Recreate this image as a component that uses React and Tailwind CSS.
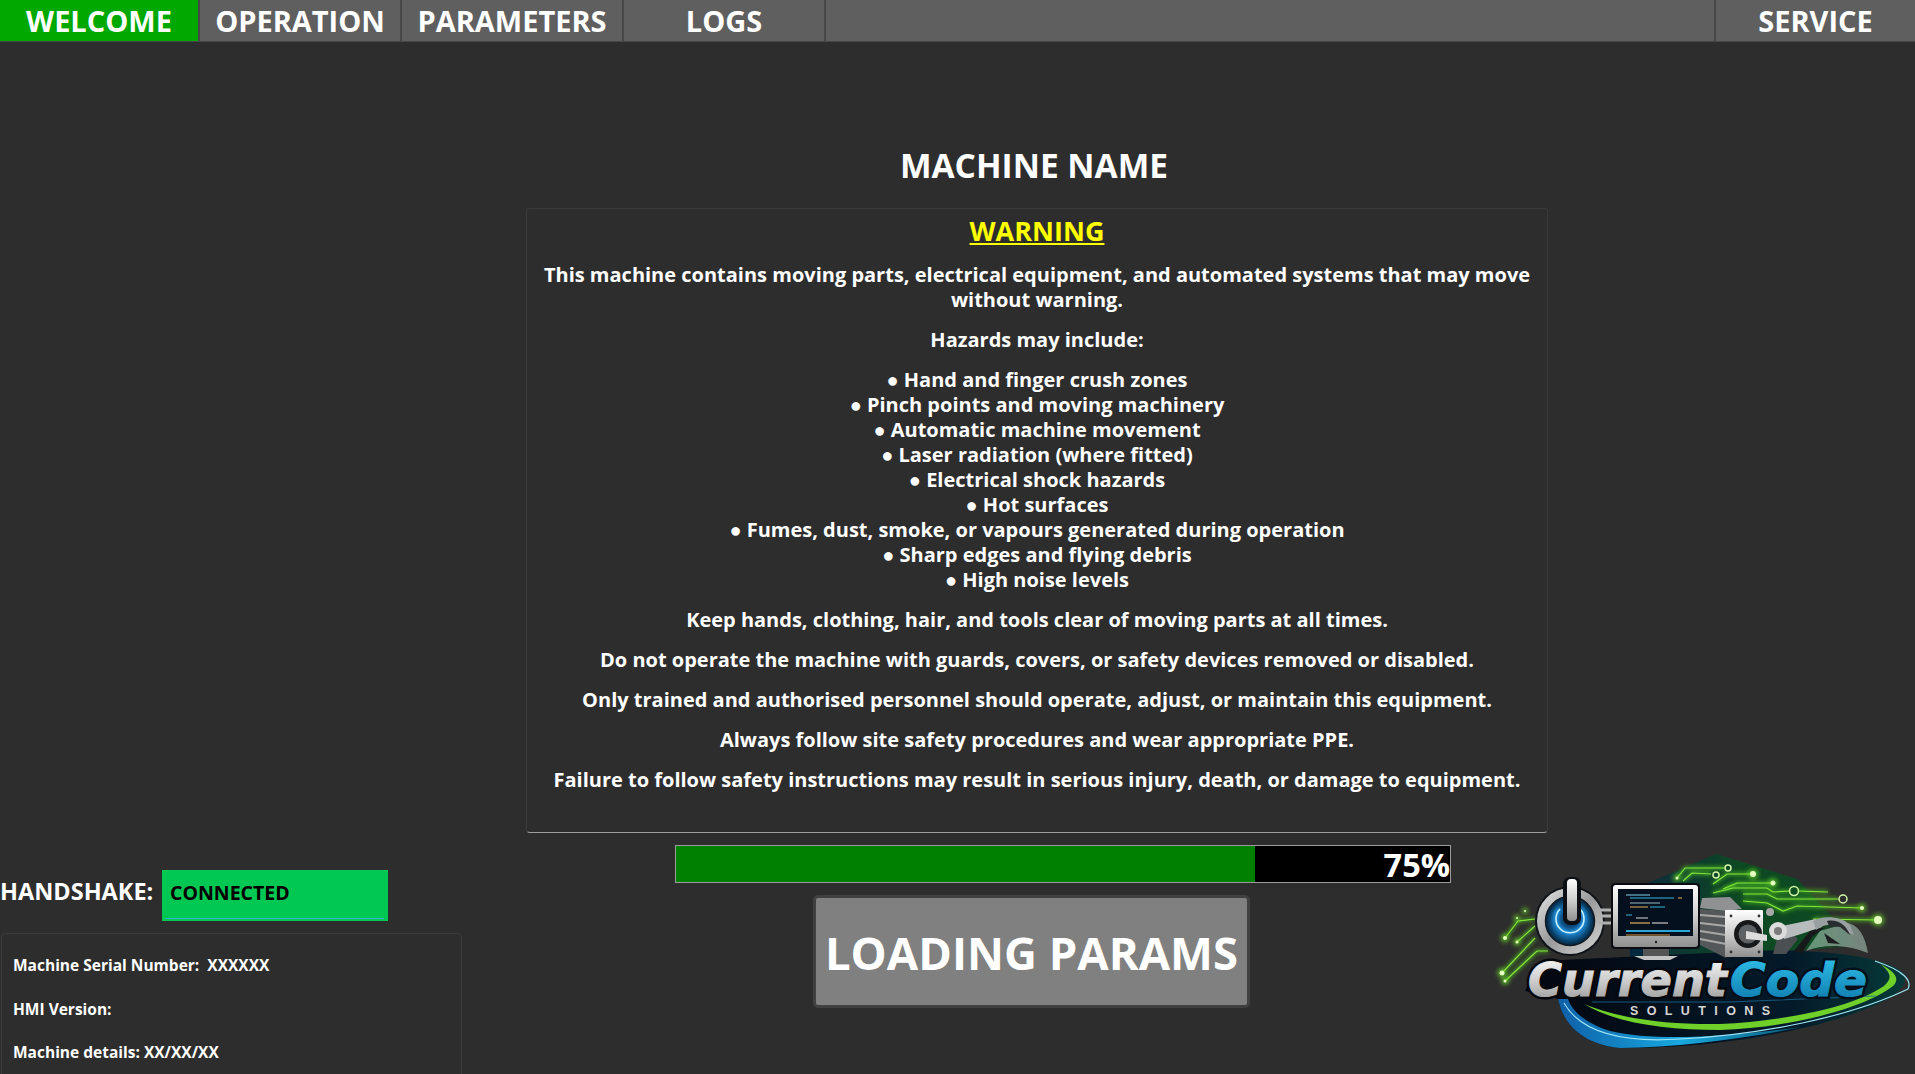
const tabs = [
  { label: 'WELCOME', width: 'w-[200px]', active: true },
  { label: 'OPERATION', width: 'w-[202px]' },
  { label: 'PARAMETERS', width: 'w-[222px]' },
  { label: 'LOGS', width: 'w-[202px]' },
];

const hazards = [
  'Hand and finger crush zones',
  'Pinch points and moving machinery',
  'Automatic machine movement',
  'Laser radiation (where fitted)',
  'Electrical shock hazards',
  'Hot surfaces',
  'Fumes, dust, smoke, or vapours generated during operation',
  'Sharp edges and flying debris',
  'High noise levels',
];

const notices = [
  'Keep hands, clothing, hair, and tools clear of moving parts at all times.',
  'Do not operate the machine with guards, covers, or safety devices removed or disabled.',
  'Only trained and authorised personnel should operate, adjust, or maintain this equipment.',
  'Always follow site safety procedures and wear appropriate PPE.',
  'Failure to follow safety instructions may result in serious injury, death, or damage to equipment.',
];

const circuitLines = [
  'M197 47 L205 37 L245 37',
  'M203 50 L212 42 L231 43',
  'M233 53 L247 43 L273 43',
  'M243 58 L257 52 L293 52',
  'M233 62 L253 57 L287 57 L293 61 L310 60',
  'M318 60 L348 61',
  'M263 63 L287 63 L297 68 L358 68',
  'M263 70 L287 72 L303 80 L317 75 L382 77',
  'M333 88 L398 89',
  'M25 107 L38 90 L55 88',
  'M37 111 L55 95',
  'M22 142 L55 107',
  'M25 150 L57 120 L68 120',
];

const circuitNodes = [
  [273, 43, 3],
  [293, 52, 2.5],
  [382, 77, 2],
  [398, 89, 4],
  [197, 47, 1.5],
  [25, 107, 2],
  [37, 111, 1.5],
  [22, 142, 2.5],
  [25, 150, 1.5],
  [45, 80, 1],
  [37, 87, 1],
];

const circuitRings = [
  [248, 37, 3],
  [236, 44, 3],
  [314, 60, 4.5],
  [363, 68, 4],
];

const codeLines = [
  ['M146 64 H170', '#7fd4e8', 1],
  ['M150 67 H194', '#39b6d8', 1.2],
  ['M198 67 H202', '#c49a4e', 1.2],
  ['M150 72 H180', '#9ab8c4', 1],
  ['M150 76 H168', '#e0b060', 1],
  ['M170 76 H185', '#39b6d8', 1],
  ['M146 84 H152', '#39b6d8', 1],
  ['M156 87 H168', '#d8d8d8', 1],
  ['M150 92 H170', '#e0b060', 1.2],
  ['M172 92 H188', '#c8c8c8', 1.2],
  ['M146 100 H210', '#29a8d8', 2],
  ['M146 104 H190', '#d89a3c', 1.2],
];

const Logo = () => (
  <svg viewBox="0 2 435 242" className="w-[435px] h-[242px] overflow-visible shrink-0 ml-[29px]">
    <defs>
      <linearGradient id="silver" x1="0" y1="0" x2="0" y2="1">
        <stop offset="0" stopColor="#ffffff" />
        <stop offset="0.55" stopColor="#c9c9c9" />
        <stop offset="1" stopColor="#8f8f8f" />
      </linearGradient>
      <linearGradient id="chrome" x1="0" y1="0" x2="1" y2="1">
        <stop offset="0" stopColor="#e8e8e8" />
        <stop offset="0.5" stopColor="#9a9a9a" />
        <stop offset="1" stopColor="#d8d8d8" />
      </linearGradient>
      <linearGradient id="codeBlue" x1="0" y1="0" x2="0" y2="1">
        <stop offset="0" stopColor="#33c4ee" />
        <stop offset="1" stopColor="#0a74a8" />
      </linearGradient>
      <linearGradient id="backdrop" x1="0" y1="0" x2="1" y2="0">
        <stop offset="0" stopColor="#05283f" />
        <stop offset="0.5" stopColor="#0d4a22" />
        <stop offset="0.8" stopColor="#0d4a22" />
        <stop offset="1" stopColor="#0d4a22" stopOpacity="0" />
      </linearGradient>
      <linearGradient id="band" x1="0" y1="0" x2="1" y2="0">
        <stop offset="0" stopColor="#03060f" />
        <stop offset="0.7" stopColor="#041a2a" />
        <stop offset="1" stopColor="#063a38" />
      </linearGradient>
      <linearGradient id="swoosh" x1="0" y1="0" x2="1" y2="0">
        <stop offset="0" stopColor="#0f5fa8" />
        <stop offset="0.5" stopColor="#18a8e0" />
        <stop offset="1" stopColor="#0c5a78" />
      </linearGradient>
      <radialGradient id="disc" cx="0.5" cy="0.5" r="0.5">
        <stop offset="0" stopColor="#0a3a66" />
        <stop offset="0.7" stopColor="#0f5d94" />
        <stop offset="1" stopColor="#052038" />
      </radialGradient>
      <filter id="glow" x="-50%" y="-50%" width="200%" height="200%">
        <feGaussianBlur stdDeviation="2" />
      </filter>
      <filter id="soft" x="-20%" y="-20%" width="140%" height="140%">
        <feGaussianBlur stdDeviation="0.5" />
      </filter>
    </defs>

    <path d="M150 60 L236 23 L317 48 L380 115 L150 130 Z" fill="url(#backdrop)" filter="url(#soft)" />

    <path d="M78 168 C85 200 110 214 140 217 C230 218 340 200 400 172 C430 158 432 142 410 134 C380 122 320 118 270 120 L60 130 L45 160 Z" fill="url(#band)" />

    <g stroke="#4fc21f" strokeWidth="2.5" fill="none" filter="url(#glow)">
      {circuitLines.map((d) => <path key={d} d={d} />)}
    </g>
    <g stroke="#86e63c" strokeWidth="1.2" fill="none">
      {circuitLines.map((d) => <path key={d} d={d} />)}
      {circuitRings.map(([x, y, r]) => <circle key={`${x}-${y}`} cx={x} cy={y} r={r} stroke="#d4f8a8" strokeWidth="1.5" />)}
    </g>
    {circuitNodes.map(([x, y, r]) => (
      <g key={`${x}-${y}`}>
        <circle cx={x} cy={y} r={r + 2.5} fill="#6fe02a" opacity="0.6" filter="url(#glow)" />
        <circle cx={x} cy={y} r={r} fill="#e4ffc0" />
      </g>
    ))}

    {/* power button */}
    <circle cx="90" cy="90" r="35" fill="#101418" />
    <circle cx="90" cy="90" r="33" fill="url(#chrome)" />
    <circle cx="90" cy="90" r="24.5" fill="url(#disc)" stroke="#101a24" strokeWidth="1.5" />
    <path d="M80 78 A14 14 0 1 0 100 78" fill="none" stroke="#2aa8ff" strokeWidth="4" filter="url(#glow)" />
    <path d="M80 78 A14 14 0 1 0 100 78" fill="none" stroke="#c8f2ff" strokeWidth="1.6" />
    <rect x="83" y="46" width="18" height="48" rx="7" fill="#0c0f14" />
    <rect x="87" y="48" width="10" height="42" rx="4" fill="url(#silver)" />
    <path d="M120 79 H134 M120 85 H134 M118 92 H134" stroke="#b0b0b0" strokeWidth="3" />

    {/* monitor */}
    <path d="M154 125 H198 L190 129 H164 Z" fill="#c4c4c4" />
    <rect x="163" y="117" width="26" height="8" fill="#555" />
    <rect x="131" y="52" width="89" height="66" rx="4" fill="#0a0c12" />
    <rect x="133" y="54" width="85" height="62" rx="3" fill="url(#silver)" />
    <rect x="138" y="58" width="75" height="47" fill="#05101e" />
    {codeLines.map(([d, color, w]) => <path key={d} d={d} stroke={color} strokeWidth={w} />)}
    <circle cx="176" cy="111" r="1.2" fill="#222" />

    {/* motor */}
    <path d="M220 78 L246 80 L246 127 L220 114 Z" fill="#55585a" />
    <path d="M220 84 L246 86 M220 92 L246 95 M220 100 L246 104 M220 108 L246 113" stroke="#a8a8a8" strokeWidth="2" />
    <path d="M222 67 L250 66 L262 78 L246 80 L220 77 Z" fill="#8f9192" />
    <rect x="245" y="79" width="38" height="47" rx="1" fill="url(#silver)" />
    <circle cx="268" cy="103" r="14" fill="#17181a" />
    <circle cx="268" cy="103" r="9.5" fill="#5f6264" />
    <path d="M266 100 L287 104 L287 110 L266 108 Z" fill="#dcdcdc" />
    <circle cx="251" cy="85" r="1.4" fill="#333" />
    <circle cx="279" cy="85" r="1.4" fill="#333" />
    <circle cx="251" cy="121" r="1.4" fill="#333" />
    <circle cx="279" cy="121" r="1.4" fill="#333" />

    {/* robot arm */}
    <path d="M326 120 C345 112 368 114 388 122 C385 104 378 94 368 92 L340 100 Z" fill="#bfe0d0" opacity="0.5" />
    <path d="M293 123 L297 108 L312 102 L318 108 L306 123 Z" fill="#4a4f52" />
    <path d="M302 95 L336 88 L342 96 L318 104 L304 108 Z" fill="#b9bcbc" />
    <path d="M314 120 L330 100 L345 96 L332 106 L322 122 Z" fill="#17191b" />
    <path d="M333 90 C342 84 362 85 370 94 L374 104 L365 100 C358 92 345 92 336 99 Z" fill="#9aa0a2" />
    <path d="M347 90 C358 88 366 94 370 104 L360 96 L349 95 Z" fill="#2a2d30" />
    <path d="M344 102 L360 113 L348 112 Z" fill="#1c1d1f" />
    <circle cx="298" cy="100" r="9" fill="#dcdcdc" />
    <circle cx="298" cy="100" r="4" fill="#7a7a7a" />
    <circle cx="290" cy="81" r="4" fill="#a8a8a8" />

    {/* swooshes */}
    <path d="M78 168 C85 200 110 214 140 217 C200 216 262 208 322 196 C260 204 180 212 130 200 C105 192 92 180 88 168 Z" fill="url(#swoosh)" />
    <path d="M84 172 C100 200 140 212 200 208 C280 204 370 186 428 158 C432 150 425 140 395 130" fill="none" stroke="#9fe4f4" strokeWidth="1.2" />
    <path d="M104 173 C135 192 185 199 240 199 C310 197 385 177 413 155 C420 148 416 141 400 133 C412 142 412 148 404 155 C370 178 300 190 240 193 C190 194 140 188 104 173 Z" fill="#6fd02a" />
    <path d="M112 171 H250 L396 165" fill="none" stroke="#1c6a94" strokeWidth="0.8" />

    <text x="48" y="165" fontFamily="'DejaVu Sans', sans-serif" fontWeight="700" fontStyle="italic" fontSize="46" fill="#05070c" stroke="#05070c" strokeWidth="6" textLength="199" lengthAdjust="spacingAndGlyphs">Current</text>
    <text x="250" y="165" fontFamily="'DejaVu Sans', sans-serif" fontWeight="700" fontStyle="italic" fontSize="46" fill="#03101c" stroke="#03101c" strokeWidth="6" textLength="137" lengthAdjust="spacingAndGlyphs">Code</text>
    <text x="48" y="165" fontFamily="'DejaVu Sans', sans-serif" fontWeight="700" fontStyle="italic" fontSize="46" fill="url(#silver)" stroke="url(#silver)" strokeWidth="1" textLength="199" lengthAdjust="spacingAndGlyphs">Current</text>
    <text x="250" y="165" fontFamily="'DejaVu Sans', sans-serif" fontWeight="700" fontStyle="italic" fontSize="46" fill="url(#codeBlue)" stroke="url(#codeBlue)" strokeWidth="1" textLength="137" lengthAdjust="spacingAndGlyphs">Code</text>
    <text x="150" y="184" fontFamily="'Liberation Sans', sans-serif" fontWeight="700" fontSize="12.5" fill="#d4d4d4" textLength="140">SOLUTIONS</text>
  </svg>
);

const App = () => {
  return (
    <div className="h-screen overflow-hidden bg-[#2d2d2d] text-white font-['Open_Sans',sans-serif] font-bold">
      <nav className="h-[42px] flex bg-[#5f5f5f] border-b border-[#474747]">
        {tabs.map((tab) => (
          <div
            key={tab.label}
            className={`${tab.width} flex items-center justify-center text-[29px] border-r-2 border-[#474747] ${tab.active ? 'bg-[#00a800]' : ''}`}
          >
            {tab.label}
          </div>
        ))}
        <div className="flex-1" />
        <div className="w-[201px] flex items-center justify-center text-[29px] border-l-2 border-[#474747]">SERVICE</div>
      </nav>

      <div className="h-[791px] flex flex-col pl-[526px] pr-[367px] justify-end">
        <h1 className="text-center text-[33.5px] leading-[42px] font-bold pr-[6px] mb-[22px]">MACHINE NAME</h1>
        <div className="h-[625px] border border-[#3b3b3b] border-b-[#9c9c9c] rounded-[4px] pt-[5px] px-3 text-center text-[20px] leading-[25px]">
          <div className="text-[27px] leading-[33px] text-[#ffff00] underline mb-[15px]">WARNING</div>
          <p className="mb-[15px]">
            This machine contains moving parts, electrical equipment, and automated systems that may move without warning.
          </p>
          <p className="mb-[15px]">Hazards may include:</p>
          <ul className="mb-[15px]">
            {hazards.map((hazard) => (
              <li key={hazard}>● {hazard}</li>
            ))}
          </ul>
          {notices.map((notice) => (
            <p key={notice} className="mb-[15px]">{notice}</p>
          ))}
        </div>
      </div>

      <div className="flex">
        <div className="w-[675px] pt-[37px]">
          <div className="flex items-start h-[51px]">
            <span className="w-[162px] text-[23.5px] leading-[42px]">HANDSHAKE:</span>
            <div className="relative w-[226px] h-[51px] bg-[#00c853] text-black text-[19.5px] pl-2 pt-[8px]">
              CONNECTED
              <div className="absolute left-1 right-1 bottom-[2px] h-px bg-[#29b6d8]" />
            </div>
          </div>
          <div className="mt-3 ml-px w-[461px] h-[170px] border border-[#3b3b3b] rounded-[4px] pl-[11px] pt-[21px] text-[15.5px] leading-[20px] flex flex-col gap-[23.5px]">
            <span className="whitespace-pre">Machine Serial Number:  XXXXXX</span>
            <span>HMI Version:</span>
            <span>Machine details: XX/XX/XX</span>
          </div>
        </div>

        <div className="w-[776px] pt-[12px]">
          <div className="relative h-[38px] border border-[#9a9a9a] bg-black">
            <div className="h-full w-[579px] bg-[#008000]" />
            <span className="absolute right-0 top-0 text-[32.5px] leading-[38px]">75%</span>
          </div>
          <div className="mt-3 ml-[138px] w-[437px] h-[113px] bg-[#808080] border-[3px] border-[#404040] rounded-[5px] flex items-center justify-center text-[45.5px] pt-[2px]">
            LOADING PARAMS
          </div>
        </div>

        <Logo />
      </div>
    </div>
  );
};

export default App;
